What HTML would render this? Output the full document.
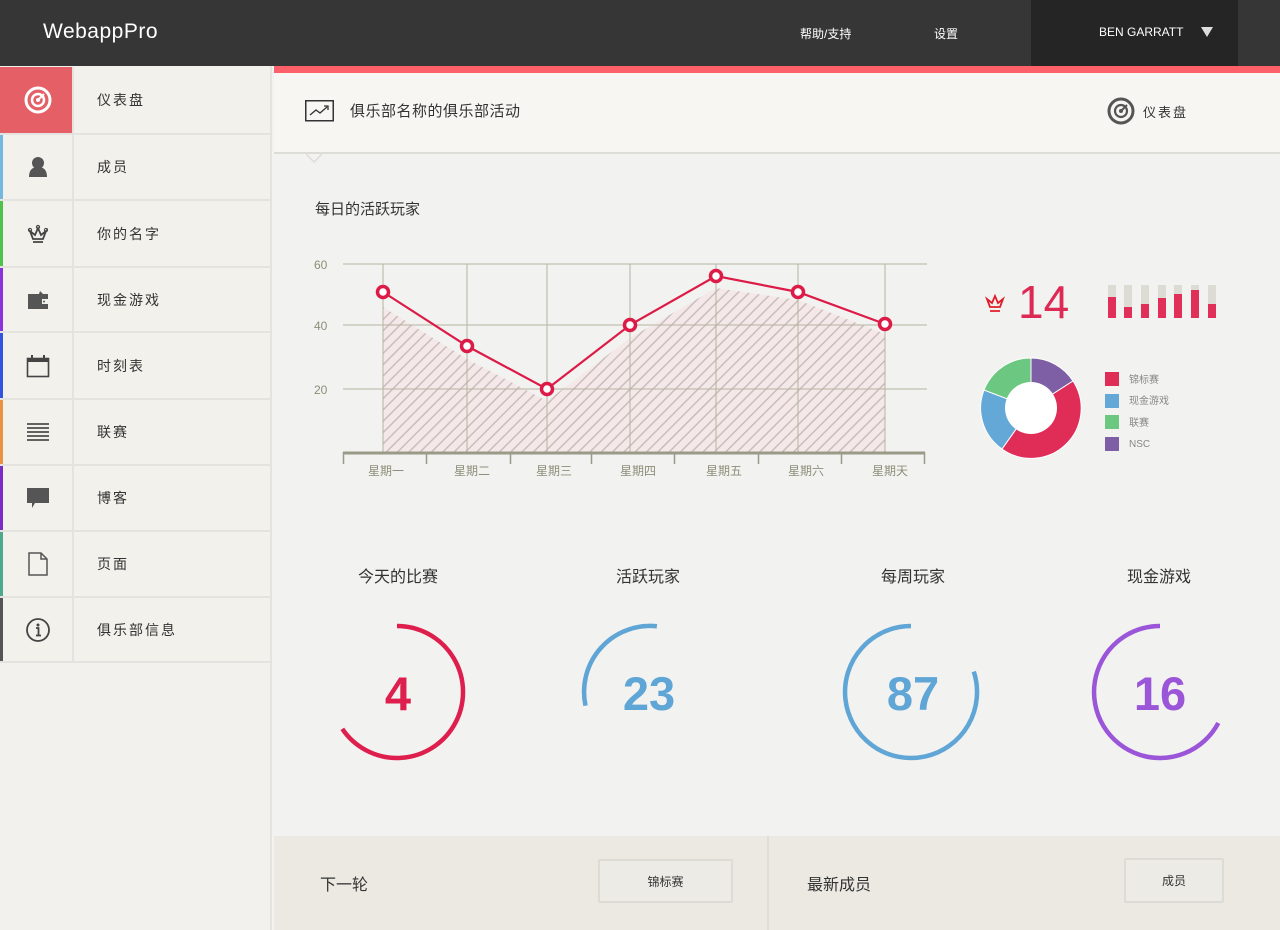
<!DOCTYPE html>
<html><head><meta charset="utf-8"><style>
*{margin:0;padding:0;box-sizing:border-box}
body{width:1280px;height:930px;overflow:hidden;background:#f2f2f0;font-family:"Liberation Sans","Noto Sans CJK SC",sans-serif;position:relative}
.abs{position:absolute}
#top{left:0;top:0;width:1280px;height:66px;background:#363636}
#logo{left:43px;top:20px;color:#fff;font-size:21px;letter-spacing:.5px}
.nav{top:25px;color:#fff;font-size:12px}
#user{left:1031px;top:0;width:207px;height:66px;background:#252525}
#side{left:0;top:66px;width:272px;height:864px;background:#f2f1ed;border-right:2px solid #e4e3df}
.row{position:absolute;left:0;width:272px;background:#e4e3e0}
.ic{position:absolute;left:0;top:0;width:72px;height:calc(100% - 2px);background:#f2f1ec;border-left:3px solid}
.lb{position:absolute;left:74px;top:0;right:2px;height:calc(100% - 2px);background:#f2f1ec;font-size:14px;color:#333;letter-spacing:2px;padding-left:23px;display:flex;align-items:center}
.ic svg{position:absolute;left:50%;top:50%;transform:translate(-50%,-50%)}
#ph{left:274px;top:73px;width:1006px;height:81px;background:#f7f6f2;border-bottom:2px solid #dedcd7}
#redbar{left:274px;top:66px;width:1006px;height:7px;background:#fd6068}
.h{color:#333}
#foot{left:274px;top:836px;width:1006px;height:94px;background:#ebe9e2}
.btn{position:absolute;border:2px solid #dcdbd5;border-radius:2px;background:#ecebe5;font-size:12px;color:#333;display:flex;align-items:center;justify-content:center}
.stat{font-size:16px;color:#333;position:absolute;top:563px;width:200px;text-align:center}
</style></head><body>
<div id="top" class="abs"></div>
<div id="logo" class="abs">WebappPro</div>
<div class="abs nav" style="left:800px">帮助/支持</div>
<div class="abs nav" style="left:934px">设置</div>
<div id="user" class="abs"></div>
<div class="abs nav" style="left:1099px;font-size:12px">BEN GARRATT</div>
<svg class="abs" style="left:1201px;top:27px" width="12" height="10"><path d="M0 0H12L6 10Z" fill="#ddd"/></svg>

<div id="side" class="abs"></div>
<div class="row" style="top:67px;height:68px"><div class="ic" style="background:#e45f66;border-left-color:#e45f66"><svg width="28" height="28" viewBox="0 0 28 28"><circle cx="14" cy="14" r="12" fill="none" stroke="#fff" stroke-width="3"/><circle cx="14" cy="14" r="6" fill="none" stroke="#fff" stroke-width="2.5"/><circle cx="14" cy="14" r="2" fill="#fff"/><path d="M14 14L20 8" stroke="#fff" stroke-width="2"/></svg></div><div class="lb">仪表盘</div></div>
<div class="row" style="top:135px;height:66px"><div class="ic" style="border-left-color:#74b7e0"><svg width="20" height="22"><circle cx="10" cy="7" r="6" fill="#555"/><path d="M1 21Q1 11 10 11Q19 11 19 21Z" fill="#555"/></svg></div><div class="lb">成员</div></div>
<div class="row" style="top:201px;height:67px"><div class="ic" style="border-left-color:#4ec24a"><svg width="22" height="20"><path d="M3 7L6 15H16L19 7L14 11L11 4L8 11Z M6 18H16" fill="none" stroke="#444" stroke-width="1.8"/><circle cx="3" cy="6" r="1.6" fill="none" stroke="#444"/><circle cx="19" cy="6" r="1.6" fill="none" stroke="#444"/><circle cx="11" cy="3" r="1.6" fill="none" stroke="#444"/></svg></div><div class="lb">你的名字</div></div>
<div class="row" style="top:268px;height:65px"><div class="ic" style="border-left-color:#8a33dc"><svg width="22" height="20"><path d="M1 4H21V19H1Z" fill="#555"/><path d="M13 1L16 4H12Z" fill="#555"/><rect x="15" y="9" width="6" height="5" fill="#f2f1ec"/><circle cx="17" cy="11.5" r="1" fill="#555"/></svg></div><div class="lb">现金游戏</div></div>
<div class="row" style="top:333px;height:67px"><div class="ic" style="border-left-color:#3255e0"><svg width="24" height="24"><rect x="1.5" y="4.5" width="21" height="18" fill="none" stroke="#444" stroke-width="1.6"/><rect x="1" y="4" width="22" height="4" fill="#444"/><rect x="5" y="1" width="2" height="5" fill="#444"/><rect x="17" y="1" width="2" height="5" fill="#444"/></svg></div><div class="lb">时刻表</div></div>
<div class="row" style="top:400px;height:66px"><div class="ic" style="border-left-color:#e89242"><svg width="22" height="20"><path d="M0 2H22M0 6H22M0 10H22M0 14H22M0 18H22" stroke="#333" stroke-width="1.6"/></svg></div><div class="lb">联赛</div></div>
<div class="row" style="top:466px;height:66px"><div class="ic" style="border-left-color:#7a2cc4"><svg width="24" height="22"><path d="M1 1H23V16H9L6 21V16H1Z" fill="#555"/></svg></div><div class="lb">博客</div></div>
<div class="row" style="top:532px;height:66px"><div class="ic" style="border-left-color:#4ea88e"><svg width="20" height="24"><path d="M1 1H13L19 7V23H1Z M13 1V7H19" fill="none" stroke="#555" stroke-width="1.5"/></svg></div><div class="lb">页面</div></div>
<div class="row" style="top:598px;height:65px"><div class="ic" style="border-left-color:#555"><svg width="26" height="26"><circle cx="13" cy="13" r="11" fill="none" stroke="#444" stroke-width="1.8"/><circle cx="13" cy="8" r="1.5" fill="#444"/><path d="M11 11H13.5V18.5M11 18.5H16" fill="none" stroke="#444" stroke-width="1.8"/></svg></div><div class="lb">俱乐部信息</div></div>

<div id="redbar" class="abs"></div>
<div id="ph" class="abs"></div>
<svg class="abs" style="left:305px;top:100px" width="30" height="22"><rect x="0.75" y="0.75" width="27.5" height="20" fill="none" stroke="#333" stroke-width="1.5"/><path d="M5 15L11 10L15 13L22 7M19 6H23V10" fill="none" stroke="#333" stroke-width="1.3"/></svg>
<div class="abs h" style="left:350px;top:100px;font-size:15px;letter-spacing:.5px">俱乐部名称的俱乐部活动</div>
<svg class="abs" style="left:306px;top:153px" width="16" height="10"><path d="M0 1L8 9L16 1" fill="#f2f2f0" stroke="#dedcd7" stroke-width="1.5"/></svg>
<svg class="abs" style="left:1107px;top:97px" width="28" height="28" viewBox="0 0 28 28"><circle cx="14" cy="14" r="12" fill="none" stroke="#555" stroke-width="3"/><circle cx="14" cy="14" r="6" fill="none" stroke="#555" stroke-width="2.2"/><circle cx="14" cy="14" r="2" fill="#555"/><path d="M14 14L20 8" stroke="#555" stroke-width="2"/></svg>
<div class="abs h" style="left:1143px;top:102px;font-size:13px;letter-spacing:2px">仪表盘</div>

<div class="abs h" style="left:315px;top:198px;font-size:15px">每日的活跃玩家</div>

<svg class="abs" style="left:0;top:0" width="1280" height="930">
<defs><pattern id="hp" width="8" height="8" patternUnits="userSpaceOnUse" patternTransform="rotate(45)"><rect width="8" height="8" fill="#f4e9e8"/><rect width="1.5" height="8" fill="#cbbdbb"/></pattern></defs>
<g font-size="12" fill="#8e8e7a" font-family="Liberation Sans">
<text x="314" y="269">60</text><text x="314" y="330">40</text><text x="314" y="394">20</text></g>
<polygon points="383,307 467,359 547,401 630,338 716,288 798,300 885,334 885,452 383,452" fill="url(#hp)"/>
<g stroke="#b4b4a2" stroke-width="1"><path d="M343 264H927M343 325H927M343 389H927"/>
<path d="M383 264V452M467 264V452M547 264V452M630 264V452M716 264V452M798 264V452M885 264V452"/></g>
<path d="M343 453H925" stroke="#9a9a88" stroke-width="3"/>
<path d="M343.5 452V464M426.5 452V464M510.5 452V464M591.5 452V464M674.5 452V464M758.5 452V464M841.5 452V464M924.5 452V464" stroke="#9a9a88" stroke-width="1.5"/>
<g font-size="12" fill="#8e8e7a" text-anchor="middle" font-family="Liberation Sans,Noto Sans CJK SC">
<text x="386" y="475">星期一</text><text x="472" y="475">星期二</text><text x="554" y="475">星期三</text><text x="638" y="475">星期四</text><text x="724" y="475">星期五</text><text x="806" y="475">星期六</text><text x="890" y="475">星期天</text></g>
<polyline points="383,292 467,346 547,389 630,325 716,276 798,292 885,324" fill="none" stroke="#dc1b47" stroke-width="2.2"/>
<g fill="#fff" stroke="#dc1b47" stroke-width="3.5">
<circle cx="383" cy="292" r="5.5"/><circle cx="467" cy="346" r="5.5"/><circle cx="547" cy="389" r="5.5"/><circle cx="630" cy="325" r="5.5"/><circle cx="716" cy="276" r="5.5"/><circle cx="798" cy="292" r="5.5"/><circle cx="885" cy="324" r="5.5"/></g>

<g fill="none" stroke="#e01e2a" stroke-width="1.8"><path d="M987 299L990 307H1000L1003 299L998 303L995 296L992 303Z M990 311H1000"/></g>
<text x="1018" y="318" font-size="46" fill="#dd2a55" font-family="Liberation Sans">14</text>
<g>
<rect x="1108" y="285" width="8" height="33" fill="#dcdbd4"/><rect x="1108" y="297" width="8" height="21" fill="#e0305a"/>
<rect x="1124" y="285" width="8" height="33" fill="#dcdbd4"/><rect x="1124" y="307" width="8" height="11" fill="#e0305a"/>
<rect x="1141" y="285" width="8" height="33" fill="#dcdbd4"/><rect x="1141" y="304" width="8" height="14" fill="#e0305a"/>
<rect x="1158" y="285" width="8" height="33" fill="#dcdbd4"/><rect x="1158" y="298" width="8" height="20" fill="#e0305a"/>
<rect x="1174" y="285" width="8" height="33" fill="#dcdbd4"/><rect x="1174" y="294" width="8" height="24" fill="#e0305a"/>
<rect x="1191" y="285" width="8" height="33" fill="#dcdbd4"/><rect x="1191" y="290" width="8" height="28" fill="#e0305a"/>
<rect x="1208" y="285" width="8" height="33" fill="#dcdbd4"/><rect x="1208" y="304" width="8" height="14" fill="#e0305a"/>
</g>
<g stroke="#fff" stroke-width="1">
<path d="M1031 358A50 50 0 0 1 1073 381L1031 408Z" fill="#7e5ea4"/>
<path d="M1073 381A50 50 0 0 1 1002 449L1031 408Z" fill="#e02d58"/>
<path d="M1002 449A50 50 0 0 1 984 390L1031 408Z" fill="#64a8d8"/>
<path d="M984 390A50 50 0 0 1 1031 358L1031 408Z" fill="#6cc880"/>
</g>
<circle cx="1031" cy="408" r="26" fill="#fff"/>
<rect x="1105" y="372" width="14" height="14" fill="#e02d58"/><rect x="1105" y="394" width="14" height="14" fill="#64a8d8"/><rect x="1105" y="415" width="14" height="14" fill="#6cc880"/><rect x="1105" y="437" width="14" height="14" fill="#7e5ea4"/>
<g font-size="10" fill="#888" font-family="Liberation Sans,Noto Sans CJK SC"><text x="1129" y="383">锦标赛</text><text x="1129" y="404">现金游戏</text><text x="1129" y="426">联赛</text><text x="1129" y="447">NSC</text></g>

<g fill="none" stroke-width="4.5">
<path d="M397 626A66 66 0 1 1 342.3 728.9" stroke="#de1e4c"/>
<path d="M585.5 705.7A66 66 0 0 1 656.9 626.3" stroke="#5fa5d6"/>
<path d="M973.8 671.6A66 66 0 1 1 911 626" stroke="#5fa5d6"/>
<path d="M1218.3 723A66 66 0 1 1 1160 626" stroke="#9b55d8"/>
</g>
<g font-size="47" font-weight="bold" text-anchor="middle" font-family="Liberation Sans">
<text x="398" y="710" fill="#de1e4c">4</text><text x="649" y="710" fill="#5fa5d6">23</text><text x="913" y="710" fill="#5fa5d6">87</text><text x="1160" y="710" fill="#9b55d8">16</text></g>
</svg>
<div class="stat" style="left:298px">今天的比赛</div>
<div class="stat" style="left:548px">活跃玩家</div>
<div class="stat" style="left:813px">每周玩家</div>
<div class="stat" style="left:1059px">现金游戏</div>

<div id="foot" class="abs"></div>
<div class="abs" style="left:767px;top:836px;width:2px;height:94px;background:#e0ded8"></div>
<div class="abs h" style="left:320px;top:871px;font-size:16px">下一轮</div>
<div class="btn" style="left:598px;top:859px;width:135px;height:44px">锦标赛</div>
<div class="abs h" style="left:807px;top:871px;font-size:16px">最新成员</div>
<div class="btn" style="left:1124px;top:858px;width:100px;height:45px">成员</div>
</body></html>
